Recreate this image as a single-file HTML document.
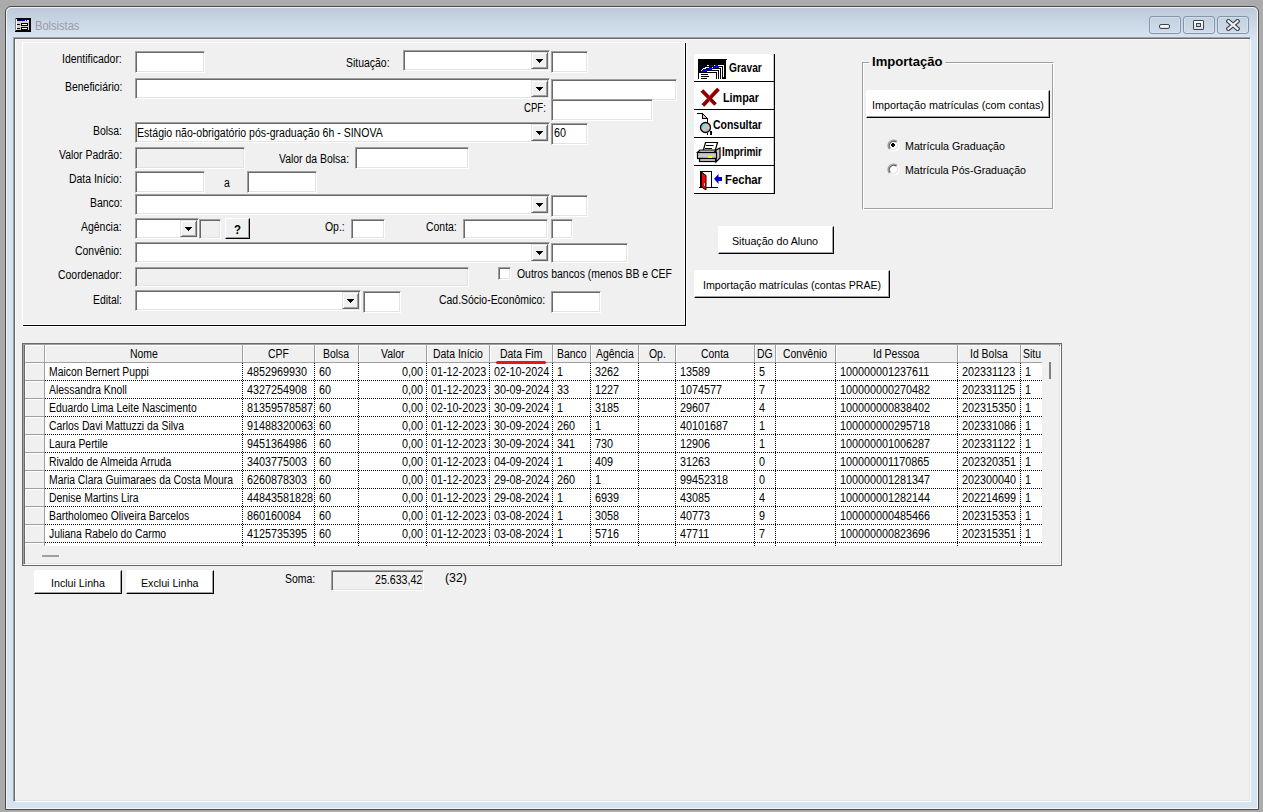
<!DOCTYPE html><html><head><meta charset="utf-8"><title>Bolsistas</title><style>
*{margin:0;padding:0;box-sizing:border-box}
html,body{width:1263px;height:812px;overflow:hidden}
body{background:#ababab;position:relative;font-family:"Liberation Sans",sans-serif;color:#000}
.a{position:absolute}
.t{position:absolute;white-space:nowrap;font-size:12px;line-height:14px;transform-origin:0 0}
.tb{position:absolute;background:#fff;border:1px solid;border-color:#a0a0a0 #fff #fff #a0a0a0;box-shadow:inset 1px 1px 0 #696969,inset -1px -1px 0 #e3e3e3}
.tb.dis{background:#f0f0f0}
.cb{position:absolute;right:1px;top:1px;bottom:1px;width:17px;background:#f0f0f0;border:1px solid;border-color:#e3e3e3 #696969 #696969 #e3e3e3;box-shadow:inset 1px 1px 0 #fff,inset -1px -1px 0 #a0a0a0}
.btn{position:absolute;background:#fff;border:1px solid;border-color:#fff #000 #000 #fff;box-shadow:inset -1px -1px 0 #a0a0a0}
.hl{position:absolute;height:1px}
.vl{position:absolute;width:1px}
</style></head><body>
<div class="a" style="left:5px;top:6px;width:1254px;height:804px;border:1px solid #4a4a4a;border-radius:6px 6px 0 0;background:#d6e3f0;box-shadow:inset 1px 1px 0 #eef3f9,inset -1px -1px 0 #f4f8fb"></div>
<div class="a" style="left:7px;top:8px;width:1250px;height:29px;border-radius:5px 5px 0 0;background:linear-gradient(#bccad9,#d7e3f0)"></div>
<svg class="a" style="left:15px;top:18px" width="16" height="14" viewBox="0 0 16 14" shape-rendering="crispEdges"><rect x="0" y="0" width="16" height="14" fill="#000"/><rect x="1" y="1" width="13" height="11" fill="#d4d0c8"/><rect x="0" y="0" width="1" height="13" fill="#808080"/><rect x="1" y="1" width="1" height="11" fill="#fff"/><rect x="2" y="1" width="12" height="2" fill="#000080"/><rect x="10" y="2" width="1" height="1" fill="#fff"/><rect x="12" y="2" width="1" height="1" fill="#fff"/><rect x="13" y="2" width="1" height="1" fill="#fff"/><rect x="2" y="6" width="3" height="1" fill="#000"/><rect x="6" y="5" width="7" height="3" fill="#000"/><rect x="7" y="6" width="5" height="1" fill="#fff"/><rect x="2" y="10" width="3" height="1" fill="#000"/><rect x="6" y="9" width="7" height="3" fill="#000"/><rect x="7" y="10" width="5" height="1" fill="#fff"/></svg>
<div class="t" style="left:35.00px;top:19px;transform:scaleX(0.925);color:#9a9aa4;">Bolsistas</div>
<div class="a" style="left:1149px;top:16px;width:32px;height:18px;border:1px solid #8394ad;border-radius:3px;background:linear-gradient(#c4d1df,#cfdbe8);box-shadow:inset 0 0 0 1px rgba(255,255,255,.25)"><div class="a" style="left:9px;top:7px;width:11px;height:5px;border:1px solid #3c4456;border-radius:2px;background:linear-gradient(#fff,#ddd)"></div></div>
<div class="a" style="left:1183px;top:16px;width:32px;height:18px;border:1px solid #8394ad;border-radius:3px;background:linear-gradient(#c4d1df,#cfdbe8);box-shadow:inset 0 0 0 1px rgba(255,255,255,.25)"><div class="a" style="left:9px;top:3px;width:11px;height:10px;border:1px solid #3c4456;border-radius:1px;background:linear-gradient(#fff,#ddd)"><div class="a" style="left:2px;top:2px;width:5px;height:4px;border:1px solid #3c4456;background:#c9d5e3"></div></div></div>
<div class="a" style="left:1217px;top:16px;width:32px;height:18px;border:1px solid #8394ad;border-radius:3px;background:linear-gradient(#c4d1df,#cfdbe8);box-shadow:inset 0 0 0 1px rgba(255,255,255,.25)"><svg class="a" style="left:8px;top:2px" width="14" height="12" viewBox="0 0 14 12"><path d="M2.5 2.2 L11.5 9.8 M11.5 2.2 L2.5 9.8" stroke="#3c4456" stroke-width="4.4" stroke-linecap="square"/><path d="M2.5 2.2 L11.5 9.8 M11.5 2.2 L2.5 9.8" stroke="#f2f2f2" stroke-width="2.2" stroke-linecap="square"/></svg></div>
<div class="a" style="left:13px;top:37px;width:1238px;height:765px;background:#f0f0f0;border:1px solid;border-color:#a0a0a0 #fff #fff #a0a0a0;box-shadow:inset 1px 1px 0 #696969,inset -1px -1px 0 #e3e3e3"></div>
<div class="hl" style="left:15px;top:39px;width:1233px;background:#fbfbfb"></div>
<div class="vl" style="left:15px;top:39px;height:760px;background:#fbfbfb"></div>
<div class="a" style="left:22px;top:42px;width:665px;height:285px;border:1px solid #fff"><div class="a" style="left:0;top:0;width:663px;height:283px;border-right:1px solid #000;border-bottom:1px solid #000;box-shadow:inset -1px -1px 0 #fff"></div></div>
<div class="t" style="left:62.24px;top:52px;transform:scaleX(0.87);">Identificador:</div>
<div class="t" style="left:64.55px;top:80px;transform:scaleX(0.87);">Beneficiário:</div>
<div class="t" style="left:346.00px;top:56px;transform:scaleX(0.87);">Situação:</div>
<div class="t" style="left:523.64px;top:101px;transform:scaleX(0.8);">CPF:</div>
<div class="t" style="left:92.99px;top:124px;transform:scaleX(0.87);">Bolsa:</div>
<div class="t" style="left:58.95px;top:148px;transform:scaleX(0.87);">Valor Padrão:</div>
<div class="t" style="left:278.99px;top:152px;transform:scaleX(0.87);">Valor da Bolsa:</div>
<div class="t" style="left:69.22px;top:172px;transform:scaleX(0.87);">Data Início:</div>
<div class="t" style="left:224.00px;top:176px;transform:scaleX(0.87);">a</div>
<div class="t" style="left:89.51px;top:196px;transform:scaleX(0.87);">Banco:</div>
<div class="t" style="left:81.38px;top:220px;transform:scaleX(0.87);">Agência:</div>
<div class="t" style="left:325.29px;top:220px;transform:scaleX(0.87);">Op.:</div>
<div class="t" style="left:426.25px;top:220px;transform:scaleX(0.87);">Conta:</div>
<div class="t" style="left:74.99px;top:244px;transform:scaleX(0.87);">Convênio:</div>
<div class="t" style="left:58.16px;top:268px;transform:scaleX(0.87);">Coordenador:</div>
<div class="t" style="left:517.00px;top:267px;transform:scaleX(0.87);">Outros bancos (menos BB e CEF</div>
<div class="t" style="left:92.99px;top:293px;transform:scaleX(0.87);">Edital:</div>
<div class="t" style="left:438.82px;top:293px;transform:scaleX(0.87);">Cad.Sócio-Econômico:</div>
<div class="tb" style="left:135px;top:51px;width:70px;height:22px;"></div>
<div class="tb" style="left:403px;top:50px;width:147px;height:21px;"><div class="cb"><svg width="8" height="5" style="position:absolute;left:4px;top:6px" shape-rendering="crispEdges"><rect x="0" y="0" width="7" height="1"/><rect x="1" y="1" width="5" height="1"/><rect x="2" y="2" width="3" height="1"/><rect x="3" y="3" width="1" height="1"/></svg></div></div>
<div class="tb" style="left:551px;top:51px;width:37px;height:22px;"></div>
<div class="tb" style="left:135px;top:78px;width:415px;height:21px;"><div class="cb"><svg width="8" height="5" style="position:absolute;left:4px;top:6px" shape-rendering="crispEdges"><rect x="0" y="0" width="7" height="1"/><rect x="1" y="1" width="5" height="1"/><rect x="2" y="2" width="3" height="1"/><rect x="3" y="3" width="1" height="1"/></svg></div></div>
<div class="tb" style="left:551px;top:79px;width:126px;height:22px;"></div>
<div class="tb" style="left:551px;top:99px;width:102px;height:22px;"></div>
<div class="tb" style="left:135px;top:122px;width:415px;height:21px;"><div class="cb"><svg width="8" height="5" style="position:absolute;left:4px;top:6px" shape-rendering="crispEdges"><rect x="0" y="0" width="7" height="1"/><rect x="1" y="1" width="5" height="1"/><rect x="2" y="2" width="3" height="1"/><rect x="3" y="3" width="1" height="1"/></svg></div></div>
<div class="tb" style="left:551px;top:123px;width:37px;height:22px;"></div>
<div class="t" style="left:137.00px;top:126px;transform:scaleX(0.88);">Estágio não-obrigatório pós-graduação 6h - SINOVA</div>
<div class="t" style="left:554.00px;top:126px;transform:scaleX(0.9);">60</div>
<div class="tb dis" style="left:135px;top:147px;width:110px;height:22px;"></div>
<div class="tb" style="left:355px;top:147px;width:114px;height:22px;"></div>
<div class="tb" style="left:135px;top:171px;width:70px;height:22px;"></div>
<div class="tb" style="left:247px;top:171px;width:70px;height:22px;"></div>
<div class="tb" style="left:135px;top:194px;width:415px;height:21px;"><div class="cb"><svg width="8" height="5" style="position:absolute;left:4px;top:6px" shape-rendering="crispEdges"><rect x="0" y="0" width="7" height="1"/><rect x="1" y="1" width="5" height="1"/><rect x="2" y="2" width="3" height="1"/><rect x="3" y="3" width="1" height="1"/></svg></div></div>
<div class="tb" style="left:551px;top:195px;width:37px;height:22px;"></div>
<div class="tb" style="left:135px;top:218px;width:64px;height:21px;"><div class="cb"><svg width="8" height="5" style="position:absolute;left:4px;top:6px" shape-rendering="crispEdges"><rect x="0" y="0" width="7" height="1"/><rect x="1" y="1" width="5" height="1"/><rect x="2" y="2" width="3" height="1"/><rect x="3" y="3" width="1" height="1"/></svg></div></div>
<div class="tb dis" style="left:199px;top:219px;width:22px;height:20px;"></div>
<div class="a" style="left:225px;top:218px;width:25px;height:21px;background:#f0f0f0;border:1px solid;border-color:#fff #000 #000 #fff;box-shadow:inset -1px -1px 0 #a0a0a0"></div>
<div class="t" style="left:233.50px;top:223px;font-weight:bold;transform:scaleX(0.95);">?</div>
<div class="tb" style="left:351px;top:219px;width:34px;height:20px;"></div>
<div class="tb" style="left:463px;top:219px;width:85px;height:20px;"></div>
<div class="tb" style="left:551px;top:219px;width:22px;height:20px;"></div>
<div class="tb" style="left:135px;top:242px;width:415px;height:21px;"><div class="cb"><svg width="8" height="5" style="position:absolute;left:4px;top:6px" shape-rendering="crispEdges"><rect x="0" y="0" width="7" height="1"/><rect x="1" y="1" width="5" height="1"/><rect x="2" y="2" width="3" height="1"/><rect x="3" y="3" width="1" height="1"/></svg></div></div>
<div class="tb" style="left:551px;top:243px;width:77px;height:20px;"></div>
<div class="tb dis" style="left:135px;top:267px;width:334px;height:20px;"></div>
<div class="a" style="left:498px;top:267px;width:13px;height:13px;background:#fff;border:1px solid;border-color:#a0a0a0 #fff #fff #a0a0a0;box-shadow:inset 1px 1px 0 #696969,inset -1px -1px 0 #e3e3e3"></div>
<div class="tb" style="left:135px;top:290px;width:226px;height:21px;"><div class="cb"><svg width="8" height="5" style="position:absolute;left:4px;top:6px" shape-rendering="crispEdges"><rect x="0" y="0" width="7" height="1"/><rect x="1" y="1" width="5" height="1"/><rect x="2" y="2" width="3" height="1"/><rect x="3" y="3" width="1" height="1"/></svg></div></div>
<div class="tb" style="left:363px;top:291px;width:38px;height:22px;"></div>
<div class="tb" style="left:551px;top:291px;width:50px;height:22px;"></div>
<div class="a" style="left:694px;top:54px;width:81px;height:28px;background:#fff;border-right:1px solid #000;border-bottom:1px solid #000;box-shadow:inset -1px 0 0 #c8c8c8"><svg class="a" style="left:4px;top:5px" width="29" height="20" viewBox="0 0 29 20" shape-rendering="crispEdges"><rect x="0" y="0" width="28" height="20" fill="#000"/><rect x="28" y="0" width="1" height="1" fill="#000"/><rect x="16" y="6" width="10" height="1" fill="#fff"/><rect x="25" y="6" width="1" height="12" fill="#fff"/><rect x="7" y="8" width="8" height="1" fill="#fff"/><rect x="21" y="8" width="3" height="1" fill="#fff"/><rect x="23" y="8" width="1" height="12" fill="#fff"/><rect x="14" y="10" width="7" height="1" fill="#fff"/><rect x="21" y="10" width="1" height="10" fill="#fff"/><rect x="9" y="12" width="10" height="1" fill="#fff"/><rect x="19" y="12" width="1" height="8" fill="#fff"/><rect x="1" y="14" width="17" height="6" fill="#fff"/><rect x="3" y="15" width="7" height="1" fill="#000"/><rect x="3" y="17" width="8" height="1" fill="#000"/><rect x="3" y="19" width="6" height="1" fill="#000"/><rect x="9" y="6" width="2" height="1" fill="#fff"/><rect x="3" y="11" width="1" height="1" fill="#fff"/><rect x="4" y="10" width="1" height="1" fill="#fff"/><rect x="5" y="9" width="3" height="1" fill="#fff"/><rect x="5" y="10" width="3" height="1" fill="#00f"/><rect x="4" y="11" width="5" height="1" fill="#00f"/><rect x="3" y="12" width="6" height="1" fill="#00f"/><rect x="11" y="8" width="3" height="1" fill="#00f"/><rect x="10" y="9" width="5" height="1" fill="#00f"/><rect x="9" y="10" width="5" height="1" fill="#00f"/><rect x="17" y="6" width="3" height="1" fill="#00f"/><rect x="16" y="7" width="5" height="1" fill="#00f"/><rect x="15" y="8" width="6" height="1" fill="#00f"/><rect x="12" y="6" width="3" height="1" fill="#00f"/><rect x="25" y="18" width="1" height="1" fill="#00f"/><rect x="27" y="16" width="1" height="1" fill="#00f"/></svg></div>
<div class="t" style="left:729.00px;top:61px;font-weight:bold;transform:scaleX(0.8478190630048464);">Gravar</div>
<div class="a" style="left:694px;top:82px;width:81px;height:28px;background:#fff;border-right:1px solid #000;border-bottom:1px solid #000;box-shadow:inset -1px 0 0 #c8c8c8"><svg class="a" style="left:5px;top:5px" width="22" height="20" viewBox="0 0 22 20"><path d="M3 3.5 L16.5 17.5" stroke="#800000" stroke-width="3.6" stroke-linecap="butt"/><path d="M19.5 2 L4 18.5" stroke="#800000" stroke-width="3.6" stroke-linecap="butt"/><path d="M1.8 4.6 L15 17.8" stroke="#f00" stroke-width="0.8"/><path d="M18.2 1 L3 17.2" stroke="#f00" stroke-width="0.8"/></svg></div>
<div class="t" style="left:723.00px;top:91px;font-weight:bold;transform:scaleX(0.9);">Limpar</div>
<div class="a" style="left:694px;top:110px;width:81px;height:28px;background:#fff;border-right:1px solid #000;border-bottom:1px solid #000;box-shadow:inset -1px 0 0 #c8c8c8"><svg class="a" style="left:0px;top:0px" width="24" height="28" viewBox="0 0 24 28" shape-rendering="crispEdges"><rect x="3" y="3" width="6" height="1" fill="#000"/><rect x="8" y="4" width="1" height="5" fill="#000"/><rect x="8" y="8" width="6" height="1" fill="#000"/><rect x="13" y="8" width="1" height="5" fill="#000"/><rect x="9" y="4" width="1" height="1" fill="#000"/><rect x="10" y="5" width="1" height="1" fill="#000"/><rect x="11" y="6" width="1" height="1" fill="#000"/><rect x="12" y="7" width="1" height="1" fill="#000"/><rect x="9" y="5" width="1" height="3" fill="#c8c8c8"/><rect x="10" y="6" width="1" height="2" fill="#c8c8c8"/><rect x="11" y="7" width="1" height="1" fill="#c8c8c8"/><circle cx="11.5" cy="17.5" r="5" fill="#c4c4c4" stroke="#000" stroke-width="1.3" shape-rendering="auto"/><rect x="8" y="15" width="2" height="1" fill="#0ff"/><rect x="8" y="16" width="1" height="2" fill="#0ff"/><rect x="10" y="14" width="1" height="1" fill="#0ff"/><rect x="12" y="19" width="2" height="1" fill="#0ff"/><rect x="13" y="23" width="1" height="2" fill="#000"/><rect x="16" y="21" width="2" height="4" fill="#000"/></svg></div>
<div class="t" style="left:713.00px;top:118px;font-weight:bold;transform:scaleX(0.8714285714285713);">Consultar</div>
<div class="a" style="left:694px;top:138px;width:81px;height:28px;background:#fff;border-right:1px solid #000;border-bottom:1px solid #000;box-shadow:inset -1px 0 0 #c8c8c8"><svg class="a" style="left:0px;top:0px" width="30" height="28" viewBox="0 0 30 28"><path d="M11.5 4.5h12l-2.5 9h-12z" fill="#fff" stroke="#000" stroke-width="1.2"/><path d="M12 7.5h7.5M11 10.5h7" stroke="#000" stroke-width="1.2"/><path d="M3.5 14.5l2.5-2.5h16l-2 2.5z" fill="#c8c8c8" stroke="#000" stroke-width="1.2"/><path d="M22 12l4 -2v10l-4 4z" fill="#c8c8c8" stroke="#000" stroke-width="1.2"/><rect x="3.5" y="14.5" width="19" height="6" fill="#c8c8c8" stroke="#000" stroke-width="1.2"/><rect x="5.5" y="20.5" width="16" height="3" fill="#c8c8c8" stroke="#000" stroke-width="1.2"/><rect x="14" y="18" width="4" height="2" fill="#ff0"/></svg></div>
<div class="t" style="left:722.00px;top:145px;font-weight:bold;transform:scaleX(0.8333333333333334);">Imprimir</div>
<div class="a" style="left:694px;top:166px;width:81px;height:28px;background:#fff;border-right:1px solid #000;border-bottom:1px solid #000;box-shadow:inset -1px 0 0 #c8c8c8"><svg class="a" style="left:0px;top:0px" width="32" height="28" viewBox="0 0 32 28" shape-rendering="crispEdges"><rect x="6" y="5" width="12" height="1" fill="#000"/><rect x="6" y="5" width="1" height="17" fill="#000"/><rect x="17" y="5" width="1" height="17" fill="#000"/><rect x="5" y="21" width="19" height="1" fill="#000"/><path d="M7.5 6 L12 9.5 V24 L7.5 21 Z" fill="#f00" stroke="#000" stroke-width="1" shape-rendering="auto"/><rect x="10" y="17" width="1" height="3" fill="#c0c0c0"/><path d="M20 12.8 L24.5 8 V11 H28 V15 H24.5 V18 Z" fill="#0000c8" shape-rendering="auto"/></svg></div>
<div class="t" style="left:725.00px;top:173px;font-weight:bold;transform:scaleX(0.9404289118347895);">Fechar</div>
<div class="a" style="left:862px;top:62px;width:192px;height:148px;border:1px solid;border-color:#a0a0a0 #fff #fff #a0a0a0;box-shadow:inset 1px 1px 0 #fff,inset -1px -1px 0 #a0a0a0"></div>
<div class="a" style="left:869px;top:55px;width:76px;height:14px;background:#f0f0f0"></div>
<div class="t" style="left:872.00px;top:55px;font-size:13px;font-weight:bold;transform:scaleX(1.004593088071349);">Importação</div>
<div class="btn" style="left:866px;top:90px;width:184px;height:28px;"></div>
<div class="t" style="left:872.00px;top:97.5px;font-size:11px;transform:scaleX(0.98);color:#000;">Importação matrículas (com contas)</div>
<svg class="a" style="left:887px;top:139px" width="13" height="13" viewBox="0 0 13 13"><circle cx="6.5" cy="6.5" r="5" fill="#fff"/><path d="M2.6 10.4A5.5 5.5 0 0 1 10.4 2.6" fill="none" stroke="#9a9a9a" stroke-width="1.2"/><path d="M10.4 2.6A5.5 5.5 0 0 1 2.6 10.4" fill="none" stroke="#fff" stroke-width="1.2"/><path d="M3.4 9.6A4.4 4.4 0 0 1 9.6 3.4" fill="none" stroke="#5a5a5a" stroke-width="1.1"/><path d="M9.6 3.4A4.4 4.4 0 0 1 3.4 9.6" fill="none" stroke="#e3e3e3" stroke-width="1.1"/><g shape-rendering="crispEdges"><rect x="5" y="4" width="2" height="4" fill="#000"/><rect x="4" y="5" width="4" height="2" fill="#000"/></g></svg>
<svg class="a" style="left:887px;top:163px" width="13" height="13" viewBox="0 0 13 13"><circle cx="6.5" cy="6.5" r="5" fill="#fff"/><path d="M2.6 10.4A5.5 5.5 0 0 1 10.4 2.6" fill="none" stroke="#9a9a9a" stroke-width="1.2"/><path d="M10.4 2.6A5.5 5.5 0 0 1 2.6 10.4" fill="none" stroke="#fff" stroke-width="1.2"/><path d="M3.4 9.6A4.4 4.4 0 0 1 9.6 3.4" fill="none" stroke="#5a5a5a" stroke-width="1.1"/><path d="M9.6 3.4A4.4 4.4 0 0 1 3.4 9.6" fill="none" stroke="#e3e3e3" stroke-width="1.1"/><g shape-rendering="crispEdges"></g></svg>
<div class="t" style="left:905.00px;top:139px;font-size:11px;transform:scaleX(0.972940103374886);">Matrícula Graduação</div>
<div class="t" style="left:905.00px;top:163px;font-size:11px;transform:scaleX(0.9648641913780215);">Matrícula Pós-Graduação</div>
<div class="btn" style="left:718px;top:226px;width:116px;height:28px;"></div>
<div class="t" style="left:732.40px;top:233.6px;font-size:11px;transform:scaleX(0.97);color:#000;">Situação do Aluno</div>
<div class="btn" style="left:694px;top:270px;width:196px;height:28px;"></div>
<div class="t" style="left:702.50px;top:277.7px;font-size:11px;transform:scaleX(0.965);color:#000;">Importação matrículas (contas PRAE)</div>
<div class="a" style="left:22px;top:343px;width:1040px;height:223px;border:1px solid #696969;background:#f0f0f0"><div class="a" style="left:0;top:0;right:0;bottom:0;border:1px solid;border-color:#a0a0a0 #fff #fff #a0a0a0;box-shadow:inset 1px 1px 0 #696969,inset -1px -1px 0 #e3e3e3"></div></div>
<div class="a" style="left:45px;top:363px;width:997px;height:183px;background:#fff"></div>
<div class="a" style="left:25px;top:345px;width:1017px;height:18px;background:#f0f0f0"></div>
<div class="hl" style="left:25px;top:345px;width:19px;background:#fff"></div>
<div class="vl" style="left:25px;top:345px;height:17px;background:#fff"></div>
<div class="hl" style="left:45px;top:345px;width:197px;background:#fff"></div>
<div class="vl" style="left:45px;top:345px;height:17px;background:#fff"></div>
<div class="hl" style="left:243px;top:345px;width:71px;background:#fff"></div>
<div class="vl" style="left:243px;top:345px;height:17px;background:#fff"></div>
<div class="hl" style="left:315px;top:345px;width:43px;background:#fff"></div>
<div class="vl" style="left:315px;top:345px;height:17px;background:#fff"></div>
<div class="hl" style="left:359px;top:345px;width:67px;background:#fff"></div>
<div class="vl" style="left:359px;top:345px;height:17px;background:#fff"></div>
<div class="hl" style="left:427px;top:345px;width:62px;background:#fff"></div>
<div class="vl" style="left:427px;top:345px;height:17px;background:#fff"></div>
<div class="hl" style="left:490px;top:345px;width:62px;background:#fff"></div>
<div class="vl" style="left:490px;top:345px;height:17px;background:#fff"></div>
<div class="hl" style="left:553px;top:345px;width:37px;background:#fff"></div>
<div class="vl" style="left:553px;top:345px;height:17px;background:#fff"></div>
<div class="hl" style="left:591px;top:345px;width:47px;background:#fff"></div>
<div class="vl" style="left:591px;top:345px;height:17px;background:#fff"></div>
<div class="hl" style="left:639px;top:345px;width:36px;background:#fff"></div>
<div class="vl" style="left:639px;top:345px;height:17px;background:#fff"></div>
<div class="hl" style="left:676px;top:345px;width:78px;background:#fff"></div>
<div class="vl" style="left:676px;top:345px;height:17px;background:#fff"></div>
<div class="hl" style="left:755px;top:345px;width:20px;background:#fff"></div>
<div class="vl" style="left:755px;top:345px;height:17px;background:#fff"></div>
<div class="hl" style="left:776px;top:345px;width:59px;background:#fff"></div>
<div class="vl" style="left:776px;top:345px;height:17px;background:#fff"></div>
<div class="hl" style="left:836px;top:345px;width:121px;background:#fff"></div>
<div class="vl" style="left:836px;top:345px;height:17px;background:#fff"></div>
<div class="hl" style="left:958px;top:345px;width:62px;background:#fff"></div>
<div class="vl" style="left:958px;top:345px;height:17px;background:#fff"></div>
<div class="hl" style="left:1021px;top:345px;width:21px;background:#fff"></div>
<div class="vl" style="left:1021px;top:345px;height:17px;background:#fff"></div>
<div class="hl" style="left:25px;top:362px;width:1017px;background:#a0a0a0"></div>
<div class="vl" style="left:44px;top:345px;height:17px;background:#a0a0a0"></div>
<div class="vl" style="left:242px;top:345px;height:17px;background:#a0a0a0"></div>
<div class="vl" style="left:314px;top:345px;height:17px;background:#a0a0a0"></div>
<div class="vl" style="left:358px;top:345px;height:17px;background:#a0a0a0"></div>
<div class="vl" style="left:426px;top:345px;height:17px;background:#a0a0a0"></div>
<div class="vl" style="left:489px;top:345px;height:17px;background:#a0a0a0"></div>
<div class="vl" style="left:552px;top:345px;height:17px;background:#a0a0a0"></div>
<div class="vl" style="left:590px;top:345px;height:17px;background:#a0a0a0"></div>
<div class="vl" style="left:638px;top:345px;height:17px;background:#a0a0a0"></div>
<div class="vl" style="left:675px;top:345px;height:17px;background:#a0a0a0"></div>
<div class="vl" style="left:754px;top:345px;height:17px;background:#a0a0a0"></div>
<div class="vl" style="left:775px;top:345px;height:17px;background:#a0a0a0"></div>
<div class="vl" style="left:835px;top:345px;height:17px;background:#a0a0a0"></div>
<div class="vl" style="left:957px;top:345px;height:17px;background:#a0a0a0"></div>
<div class="vl" style="left:1020px;top:345px;height:17px;background:#a0a0a0"></div>
<div class="vl" style="left:25px;top:363px;height:17px;background:#fff"></div>
<div class="hl" style="left:25px;top:363px;width:19px;background:#fff"></div>
<div class="hl" style="left:25px;top:380px;width:19px;background:#a0a0a0"></div>
<div class="vl" style="left:25px;top:381px;height:17px;background:#fff"></div>
<div class="hl" style="left:25px;top:381px;width:19px;background:#fff"></div>
<div class="hl" style="left:25px;top:398px;width:19px;background:#a0a0a0"></div>
<div class="vl" style="left:25px;top:399px;height:17px;background:#fff"></div>
<div class="hl" style="left:25px;top:399px;width:19px;background:#fff"></div>
<div class="hl" style="left:25px;top:416px;width:19px;background:#a0a0a0"></div>
<div class="vl" style="left:25px;top:417px;height:17px;background:#fff"></div>
<div class="hl" style="left:25px;top:417px;width:19px;background:#fff"></div>
<div class="hl" style="left:25px;top:434px;width:19px;background:#a0a0a0"></div>
<div class="vl" style="left:25px;top:435px;height:17px;background:#fff"></div>
<div class="hl" style="left:25px;top:435px;width:19px;background:#fff"></div>
<div class="hl" style="left:25px;top:452px;width:19px;background:#a0a0a0"></div>
<div class="vl" style="left:25px;top:453px;height:17px;background:#fff"></div>
<div class="hl" style="left:25px;top:453px;width:19px;background:#fff"></div>
<div class="hl" style="left:25px;top:470px;width:19px;background:#a0a0a0"></div>
<div class="vl" style="left:25px;top:471px;height:17px;background:#fff"></div>
<div class="hl" style="left:25px;top:471px;width:19px;background:#fff"></div>
<div class="hl" style="left:25px;top:488px;width:19px;background:#a0a0a0"></div>
<div class="vl" style="left:25px;top:489px;height:17px;background:#fff"></div>
<div class="hl" style="left:25px;top:489px;width:19px;background:#fff"></div>
<div class="hl" style="left:25px;top:506px;width:19px;background:#a0a0a0"></div>
<div class="vl" style="left:25px;top:507px;height:17px;background:#fff"></div>
<div class="hl" style="left:25px;top:507px;width:19px;background:#fff"></div>
<div class="hl" style="left:25px;top:524px;width:19px;background:#a0a0a0"></div>
<div class="vl" style="left:25px;top:525px;height:17px;background:#fff"></div>
<div class="hl" style="left:25px;top:525px;width:19px;background:#fff"></div>
<div class="hl" style="left:25px;top:542px;width:19px;background:#a0a0a0"></div>
<div class="vl" style="left:25px;top:543px;height:3px;background:#fff"></div>
<div class="hl" style="left:25px;top:543px;width:19px;background:#fff"></div>
<div class="vl" style="left:44px;top:363px;height:183px;background:#a0a0a0"></div>
<div class="hl" style="left:45px;top:380px;width:997px;background:repeating-linear-gradient(90deg,#000 0 1px,transparent 1px 2px)"></div>
<div class="hl" style="left:45px;top:398px;width:997px;background:repeating-linear-gradient(90deg,#000 0 1px,transparent 1px 2px)"></div>
<div class="hl" style="left:45px;top:416px;width:997px;background:repeating-linear-gradient(90deg,#000 0 1px,transparent 1px 2px)"></div>
<div class="hl" style="left:45px;top:434px;width:997px;background:repeating-linear-gradient(90deg,#000 0 1px,transparent 1px 2px)"></div>
<div class="hl" style="left:45px;top:452px;width:997px;background:repeating-linear-gradient(90deg,#000 0 1px,transparent 1px 2px)"></div>
<div class="hl" style="left:45px;top:470px;width:997px;background:repeating-linear-gradient(90deg,#000 0 1px,transparent 1px 2px)"></div>
<div class="hl" style="left:45px;top:488px;width:997px;background:repeating-linear-gradient(90deg,#000 0 1px,transparent 1px 2px)"></div>
<div class="hl" style="left:45px;top:506px;width:997px;background:repeating-linear-gradient(90deg,#000 0 1px,transparent 1px 2px)"></div>
<div class="hl" style="left:45px;top:524px;width:997px;background:repeating-linear-gradient(90deg,#000 0 1px,transparent 1px 2px)"></div>
<div class="hl" style="left:45px;top:542px;width:997px;background:repeating-linear-gradient(90deg,#000 0 1px,transparent 1px 2px)"></div>
<div class="vl" style="left:242px;top:363px;height:183px;background:repeating-linear-gradient(180deg,#000 0 1px,transparent 1px 2px)"></div>
<div class="vl" style="left:314px;top:363px;height:183px;background:repeating-linear-gradient(180deg,#000 0 1px,transparent 1px 2px)"></div>
<div class="vl" style="left:358px;top:363px;height:183px;background:repeating-linear-gradient(180deg,#000 0 1px,transparent 1px 2px)"></div>
<div class="vl" style="left:426px;top:363px;height:183px;background:repeating-linear-gradient(180deg,#000 0 1px,transparent 1px 2px)"></div>
<div class="vl" style="left:489px;top:363px;height:183px;background:repeating-linear-gradient(180deg,#000 0 1px,transparent 1px 2px)"></div>
<div class="vl" style="left:552px;top:363px;height:183px;background:repeating-linear-gradient(180deg,#000 0 1px,transparent 1px 2px)"></div>
<div class="vl" style="left:590px;top:363px;height:183px;background:repeating-linear-gradient(180deg,#000 0 1px,transparent 1px 2px)"></div>
<div class="vl" style="left:638px;top:363px;height:183px;background:repeating-linear-gradient(180deg,#000 0 1px,transparent 1px 2px)"></div>
<div class="vl" style="left:675px;top:363px;height:183px;background:repeating-linear-gradient(180deg,#000 0 1px,transparent 1px 2px)"></div>
<div class="vl" style="left:754px;top:363px;height:183px;background:repeating-linear-gradient(180deg,#000 0 1px,transparent 1px 2px)"></div>
<div class="vl" style="left:775px;top:363px;height:183px;background:repeating-linear-gradient(180deg,#000 0 1px,transparent 1px 2px)"></div>
<div class="vl" style="left:835px;top:363px;height:183px;background:repeating-linear-gradient(180deg,#000 0 1px,transparent 1px 2px)"></div>
<div class="vl" style="left:957px;top:363px;height:183px;background:repeating-linear-gradient(180deg,#000 0 1px,transparent 1px 2px)"></div>
<div class="vl" style="left:1020px;top:363px;height:183px;background:repeating-linear-gradient(180deg,#000 0 1px,transparent 1px 2px)"></div>
<div class="t" style="left:129.57px;top:347px;transform:scaleX(0.87);">Nome</div>
<div class="t" style="left:268.06px;top:347px;transform:scaleX(0.87);">CPF</div>
<div class="t" style="left:323.44px;top:347px;transform:scaleX(0.87);">Bolsa</div>
<div class="t" style="left:380.70px;top:347px;transform:scaleX(0.87);">Valor</div>
<div class="t" style="left:433.06px;top:347px;transform:scaleX(0.87);">Data Início</div>
<div class="t" style="left:499.83px;top:347px;transform:scaleX(0.87);">Data Fim</div>
<div class="t" style="left:556.70px;top:347px;transform:scaleX(0.87);">Banco</div>
<div class="t" style="left:595.64px;top:347px;transform:scaleX(0.87);">Agência</div>
<div class="t" style="left:648.59px;top:347px;transform:scaleX(0.87);">Op.</div>
<div class="t" style="left:701.07px;top:347px;transform:scaleX(0.87);">Conta</div>
<div class="t" style="left:757.17px;top:347px;transform:scaleX(0.87);">DG</div>
<div class="t" style="left:783.44px;top:347px;transform:scaleX(0.87);">Convênio</div>
<div class="t" style="left:873.30px;top:347px;transform:scaleX(0.87);">Id Pessoa</div>
<div class="t" style="left:970.15px;top:347px;transform:scaleX(0.87);">Id Bolsa</div>
<div class="t" style="left:1023.00px;top:347px;transform:scaleX(0.87);">Situ</div>
<div class="a" style="left:496px;top:361px;width:50px;height:3px;background:#e0191c;border-radius:2px"></div>
<div class="t" style="left:48.50px;top:365px;transform:scaleX(0.865);">Maicon Bernert Puppi</div>
<div class="t" style="left:246.50px;top:365px;transform:scaleX(0.9);">4852969930</div>
<div class="t" style="left:318.50px;top:365px;transform:scaleX(0.9);">60</div>
<div class="t" style="left:401.99px;top:365px;transform:scaleX(0.9);">0,00</div>
<div class="t" style="left:430.50px;top:365px;transform:scaleX(0.9);">01-12-2023</div>
<div class="t" style="left:493.50px;top:365px;transform:scaleX(0.9);">02-10-2024</div>
<div class="t" style="left:556.50px;top:365px;transform:scaleX(0.9);">1</div>
<div class="t" style="left:594.50px;top:365px;transform:scaleX(0.9);">3262</div>
<div class="t" style="left:679.50px;top:365px;transform:scaleX(0.9);">13589</div>
<div class="t" style="left:758.50px;top:365px;transform:scaleX(0.9);">5</div>
<div class="t" style="left:839.50px;top:365px;transform:scaleX(0.9);">100000001237611</div>
<div class="t" style="left:961.50px;top:365px;transform:scaleX(0.9);">202331123</div>
<div class="t" style="left:1024.50px;top:365px;transform:scaleX(0.9);">1</div>
<div class="t" style="left:48.50px;top:383px;transform:scaleX(0.865);">Alessandra Knoll</div>
<div class="t" style="left:246.50px;top:383px;transform:scaleX(0.9);">4327254908</div>
<div class="t" style="left:318.50px;top:383px;transform:scaleX(0.9);">60</div>
<div class="t" style="left:401.99px;top:383px;transform:scaleX(0.9);">0,00</div>
<div class="t" style="left:430.50px;top:383px;transform:scaleX(0.9);">01-12-2023</div>
<div class="t" style="left:493.50px;top:383px;transform:scaleX(0.9);">30-09-2024</div>
<div class="t" style="left:556.50px;top:383px;transform:scaleX(0.9);">33</div>
<div class="t" style="left:594.50px;top:383px;transform:scaleX(0.9);">1227</div>
<div class="t" style="left:679.50px;top:383px;transform:scaleX(0.9);">1074577</div>
<div class="t" style="left:758.50px;top:383px;transform:scaleX(0.9);">7</div>
<div class="t" style="left:839.50px;top:383px;transform:scaleX(0.9);">100000000270482</div>
<div class="t" style="left:961.50px;top:383px;transform:scaleX(0.9);">202331125</div>
<div class="t" style="left:1024.50px;top:383px;transform:scaleX(0.9);">1</div>
<div class="t" style="left:48.50px;top:401px;transform:scaleX(0.865);">Eduardo Lima Leite Nascimento</div>
<div class="t" style="left:246.50px;top:401px;transform:scaleX(0.9);">81359578587</div>
<div class="t" style="left:318.50px;top:401px;transform:scaleX(0.9);">60</div>
<div class="t" style="left:401.99px;top:401px;transform:scaleX(0.9);">0,00</div>
<div class="t" style="left:430.50px;top:401px;transform:scaleX(0.9);">02-10-2023</div>
<div class="t" style="left:493.50px;top:401px;transform:scaleX(0.9);">30-09-2024</div>
<div class="t" style="left:556.50px;top:401px;transform:scaleX(0.9);">1</div>
<div class="t" style="left:594.50px;top:401px;transform:scaleX(0.9);">3185</div>
<div class="t" style="left:679.50px;top:401px;transform:scaleX(0.9);">29607</div>
<div class="t" style="left:758.50px;top:401px;transform:scaleX(0.9);">4</div>
<div class="t" style="left:839.50px;top:401px;transform:scaleX(0.9);">100000000838402</div>
<div class="t" style="left:961.50px;top:401px;transform:scaleX(0.9);">202315350</div>
<div class="t" style="left:1024.50px;top:401px;transform:scaleX(0.9);">1</div>
<div class="t" style="left:48.50px;top:419px;transform:scaleX(0.865);">Carlos Davi Mattuzzi da Silva</div>
<div class="t" style="left:246.50px;top:419px;transform:scaleX(0.9);">91488320063</div>
<div class="t" style="left:318.50px;top:419px;transform:scaleX(0.9);">60</div>
<div class="t" style="left:401.99px;top:419px;transform:scaleX(0.9);">0,00</div>
<div class="t" style="left:430.50px;top:419px;transform:scaleX(0.9);">01-12-2023</div>
<div class="t" style="left:493.50px;top:419px;transform:scaleX(0.9);">30-09-2024</div>
<div class="t" style="left:556.50px;top:419px;transform:scaleX(0.9);">260</div>
<div class="t" style="left:594.50px;top:419px;transform:scaleX(0.9);">1</div>
<div class="t" style="left:679.50px;top:419px;transform:scaleX(0.9);">40101687</div>
<div class="t" style="left:758.50px;top:419px;transform:scaleX(0.9);">1</div>
<div class="t" style="left:839.50px;top:419px;transform:scaleX(0.9);">100000000295718</div>
<div class="t" style="left:961.50px;top:419px;transform:scaleX(0.9);">202331086</div>
<div class="t" style="left:1024.50px;top:419px;transform:scaleX(0.9);">1</div>
<div class="t" style="left:48.50px;top:437px;transform:scaleX(0.865);">Laura Pertile</div>
<div class="t" style="left:246.50px;top:437px;transform:scaleX(0.9);">9451364986</div>
<div class="t" style="left:318.50px;top:437px;transform:scaleX(0.9);">60</div>
<div class="t" style="left:401.99px;top:437px;transform:scaleX(0.9);">0,00</div>
<div class="t" style="left:430.50px;top:437px;transform:scaleX(0.9);">01-12-2023</div>
<div class="t" style="left:493.50px;top:437px;transform:scaleX(0.9);">30-09-2024</div>
<div class="t" style="left:556.50px;top:437px;transform:scaleX(0.9);">341</div>
<div class="t" style="left:594.50px;top:437px;transform:scaleX(0.9);">730</div>
<div class="t" style="left:679.50px;top:437px;transform:scaleX(0.9);">12906</div>
<div class="t" style="left:758.50px;top:437px;transform:scaleX(0.9);">1</div>
<div class="t" style="left:839.50px;top:437px;transform:scaleX(0.9);">100000001006287</div>
<div class="t" style="left:961.50px;top:437px;transform:scaleX(0.9);">202331122</div>
<div class="t" style="left:1024.50px;top:437px;transform:scaleX(0.9);">1</div>
<div class="t" style="left:48.50px;top:455px;transform:scaleX(0.865);">Rivaldo de Almeida Arruda</div>
<div class="t" style="left:246.50px;top:455px;transform:scaleX(0.9);">3403775003</div>
<div class="t" style="left:318.50px;top:455px;transform:scaleX(0.9);">60</div>
<div class="t" style="left:401.99px;top:455px;transform:scaleX(0.9);">0,00</div>
<div class="t" style="left:430.50px;top:455px;transform:scaleX(0.9);">01-12-2023</div>
<div class="t" style="left:493.50px;top:455px;transform:scaleX(0.9);">04-09-2024</div>
<div class="t" style="left:556.50px;top:455px;transform:scaleX(0.9);">1</div>
<div class="t" style="left:594.50px;top:455px;transform:scaleX(0.9);">409</div>
<div class="t" style="left:679.50px;top:455px;transform:scaleX(0.9);">31263</div>
<div class="t" style="left:758.50px;top:455px;transform:scaleX(0.9);">0</div>
<div class="t" style="left:839.50px;top:455px;transform:scaleX(0.9);">100000001170865</div>
<div class="t" style="left:961.50px;top:455px;transform:scaleX(0.9);">202320351</div>
<div class="t" style="left:1024.50px;top:455px;transform:scaleX(0.9);">1</div>
<div class="t" style="left:48.50px;top:473px;transform:scaleX(0.865);">Maria Clara Guimaraes da Costa Moura</div>
<div class="t" style="left:246.50px;top:473px;transform:scaleX(0.9);">6260878303</div>
<div class="t" style="left:318.50px;top:473px;transform:scaleX(0.9);">60</div>
<div class="t" style="left:401.99px;top:473px;transform:scaleX(0.9);">0,00</div>
<div class="t" style="left:430.50px;top:473px;transform:scaleX(0.9);">01-12-2023</div>
<div class="t" style="left:493.50px;top:473px;transform:scaleX(0.9);">29-08-2024</div>
<div class="t" style="left:556.50px;top:473px;transform:scaleX(0.9);">260</div>
<div class="t" style="left:594.50px;top:473px;transform:scaleX(0.9);">1</div>
<div class="t" style="left:679.50px;top:473px;transform:scaleX(0.9);">99452318</div>
<div class="t" style="left:758.50px;top:473px;transform:scaleX(0.9);">0</div>
<div class="t" style="left:839.50px;top:473px;transform:scaleX(0.9);">100000001281347</div>
<div class="t" style="left:961.50px;top:473px;transform:scaleX(0.9);">202300040</div>
<div class="t" style="left:1024.50px;top:473px;transform:scaleX(0.9);">1</div>
<div class="t" style="left:48.50px;top:491px;transform:scaleX(0.865);">Denise Martins Lira</div>
<div class="t" style="left:246.50px;top:491px;transform:scaleX(0.9);">44843581828</div>
<div class="t" style="left:318.50px;top:491px;transform:scaleX(0.9);">60</div>
<div class="t" style="left:401.99px;top:491px;transform:scaleX(0.9);">0,00</div>
<div class="t" style="left:430.50px;top:491px;transform:scaleX(0.9);">01-12-2023</div>
<div class="t" style="left:493.50px;top:491px;transform:scaleX(0.9);">29-08-2024</div>
<div class="t" style="left:556.50px;top:491px;transform:scaleX(0.9);">1</div>
<div class="t" style="left:594.50px;top:491px;transform:scaleX(0.9);">6939</div>
<div class="t" style="left:679.50px;top:491px;transform:scaleX(0.9);">43085</div>
<div class="t" style="left:758.50px;top:491px;transform:scaleX(0.9);">4</div>
<div class="t" style="left:839.50px;top:491px;transform:scaleX(0.9);">100000001282144</div>
<div class="t" style="left:961.50px;top:491px;transform:scaleX(0.9);">202214699</div>
<div class="t" style="left:1024.50px;top:491px;transform:scaleX(0.9);">1</div>
<div class="t" style="left:48.50px;top:509px;transform:scaleX(0.865);">Bartholomeo Oliveira Barcelos</div>
<div class="t" style="left:246.50px;top:509px;transform:scaleX(0.9);">860160084</div>
<div class="t" style="left:318.50px;top:509px;transform:scaleX(0.9);">60</div>
<div class="t" style="left:401.99px;top:509px;transform:scaleX(0.9);">0,00</div>
<div class="t" style="left:430.50px;top:509px;transform:scaleX(0.9);">01-12-2023</div>
<div class="t" style="left:493.50px;top:509px;transform:scaleX(0.9);">03-08-2024</div>
<div class="t" style="left:556.50px;top:509px;transform:scaleX(0.9);">1</div>
<div class="t" style="left:594.50px;top:509px;transform:scaleX(0.9);">3058</div>
<div class="t" style="left:679.50px;top:509px;transform:scaleX(0.9);">40773</div>
<div class="t" style="left:758.50px;top:509px;transform:scaleX(0.9);">9</div>
<div class="t" style="left:839.50px;top:509px;transform:scaleX(0.9);">100000000485466</div>
<div class="t" style="left:961.50px;top:509px;transform:scaleX(0.9);">202315353</div>
<div class="t" style="left:1024.50px;top:509px;transform:scaleX(0.9);">1</div>
<div class="t" style="left:48.50px;top:527px;transform:scaleX(0.865);">Juliana Rabelo do Carmo</div>
<div class="t" style="left:246.50px;top:527px;transform:scaleX(0.9);">4125735395</div>
<div class="t" style="left:318.50px;top:527px;transform:scaleX(0.9);">60</div>
<div class="t" style="left:401.99px;top:527px;transform:scaleX(0.9);">0,00</div>
<div class="t" style="left:430.50px;top:527px;transform:scaleX(0.9);">01-12-2023</div>
<div class="t" style="left:493.50px;top:527px;transform:scaleX(0.9);">03-08-2024</div>
<div class="t" style="left:556.50px;top:527px;transform:scaleX(0.9);">1</div>
<div class="t" style="left:594.50px;top:527px;transform:scaleX(0.9);">5716</div>
<div class="t" style="left:679.50px;top:527px;transform:scaleX(0.9);">47711</div>
<div class="t" style="left:758.50px;top:527px;transform:scaleX(0.9);">7</div>
<div class="t" style="left:839.50px;top:527px;transform:scaleX(0.9);">100000000823696</div>
<div class="t" style="left:961.50px;top:527px;transform:scaleX(0.9);">202315351</div>
<div class="t" style="left:1024.50px;top:527px;transform:scaleX(0.9);">1</div>
<div class="a" style="left:1042px;top:345px;width:17px;height:218px;background:#f0f0f0"></div>
<div class="a" style="left:1049px;top:362px;width:2px;height:17px;background:#808080"></div>
<div class="a" style="left:42px;top:555px;width:17px;height:2px;background:#a0a0a0"></div>
<div class="btn" style="left:34px;top:570px;width:88px;height:24px;"></div>
<div class="t" style="left:51.30px;top:576.4px;font-size:11px;transform:scaleX(0.97);color:#000;">Inclui Linha</div>
<div class="btn" style="left:126px;top:570px;width:88px;height:24px;"></div>
<div class="t" style="left:141.10px;top:576.4px;font-size:11px;transform:scaleX(0.97);color:#000;">Exclui Linha</div>
<div class="t" style="left:285.00px;top:572px;transform:scaleX(0.87);">Soma:</div>
<div class="tb dis" style="left:331px;top:570px;width:93px;height:21px;"></div>
<div class="t" style="left:374.78px;top:573px;transform:scaleX(0.885);">25.633,42</div>
<div class="t" style="left:445.00px;top:571px;transform:scaleX(1.03);">(32)</div>
</body></html>
